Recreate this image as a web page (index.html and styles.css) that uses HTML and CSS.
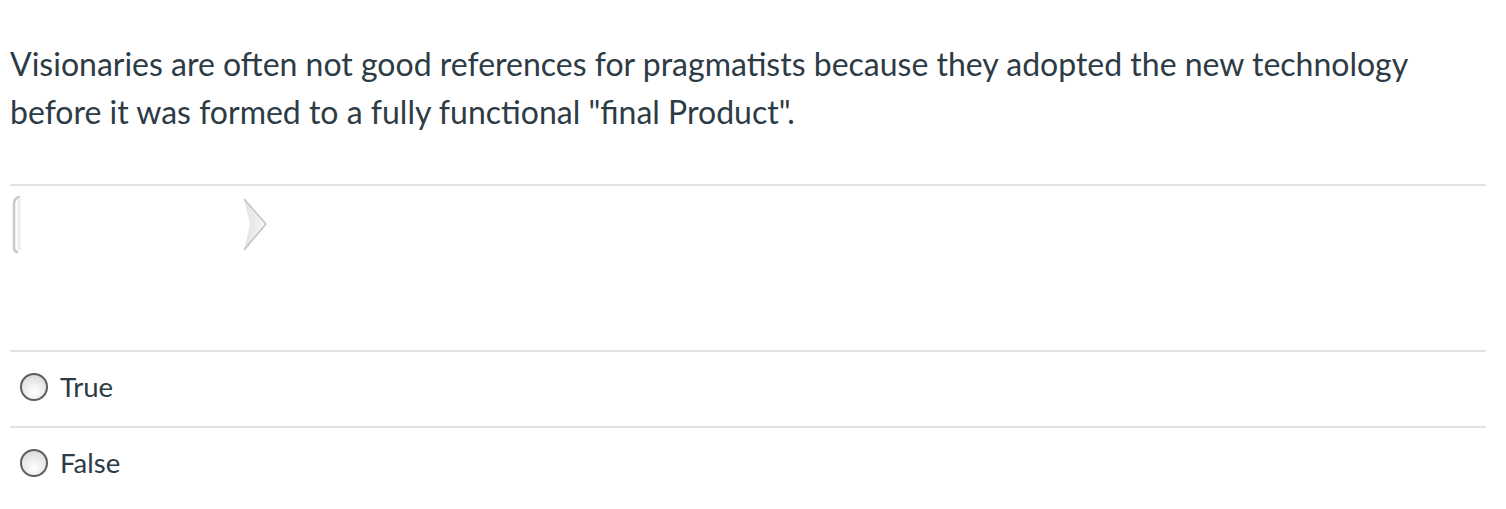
FILE: index.html
```
<!DOCTYPE html>
<html>
<head>
<meta charset="utf-8">
<link rel="stylesheet" href="styles.css">
</head>
<body>
<div class="page">
  <div class="question">Visionaries are often not good references for pragmatists because they adopted the new technology before it was formed to a fully functional "final Product".</div>
  <div class="media">
    <svg class="broken" width="270" height="70" viewBox="0 0 270 70">
      <defs>
        <linearGradient id="g1" x1="0" x2="1" y1="0" y2="0">
          <stop offset="0" stop-color="#e2e2e2"/>
          <stop offset="1" stop-color="#f7f7f7"/>
        </linearGradient>
      </defs>
      <path d="M9 11 Q4 12 4 18 L4 62 Q4 65 7 66" fill="none" stroke="#c8c8c8" stroke-width="2.5" stroke-linecap="round"/>
      <path d="M9 12 L9 64" fill="none" stroke="#ececec" stroke-width="3"/>
      <path d="M234 13 L256 38 L234 64 L240 38 Z" fill="url(#g1)"/>
      <path d="M234 13 L256 38 L234 64" fill="none" stroke="#c4c4c4" stroke-width="1.6" stroke-linejoin="round"/>
    </svg>
  </div>
  <div class="answers">
    <label class="answer"><span class="radio"></span><span class="label">True</span></label>
    <label class="answer"><span class="radio"></span><span class="label">False</span></label>
  </div>
</div>
</body>
</html>
```
FILE: styles.css
```
html, body {
  margin: 0;
  padding: 0;
  background: #fff;
}
.page {
  padding: 40px 20px 0 10px;
  font-family: Lato, "Open Sans", sans-serif;
  color: #2d3b45;
}
.question {
  font-size: 32px;
  line-height: 48px;
  padding-bottom: 48px;
  border-bottom: 2px solid #dfe2e5;
}
.media {
  height: 164px;
  border-bottom: 2px solid #dfe2e5;
}
.broken {
  display: block;
  margin-left: 0;
}
.answer {
  display: flex;
  align-items: center;
  height: 74px;
  border-bottom: 2px solid #dfe2e5;
  font-size: 27.5px;
}
.answer:last-child {
  border-bottom: none;
}
.radio {
  width: 24px;
  height: 24px;
  border-radius: 50%;
  border: 2px solid #5a5f63;
  background: radial-gradient(circle at 50% 70%, #ffffff 0%, #e6e6e6 60%, #cfcfcf 100%);
  margin: 0 12px 4px 10px;
  flex: none;
}
.label {
  line-height: 30px;
  margin-bottom: 5px;
}
```
